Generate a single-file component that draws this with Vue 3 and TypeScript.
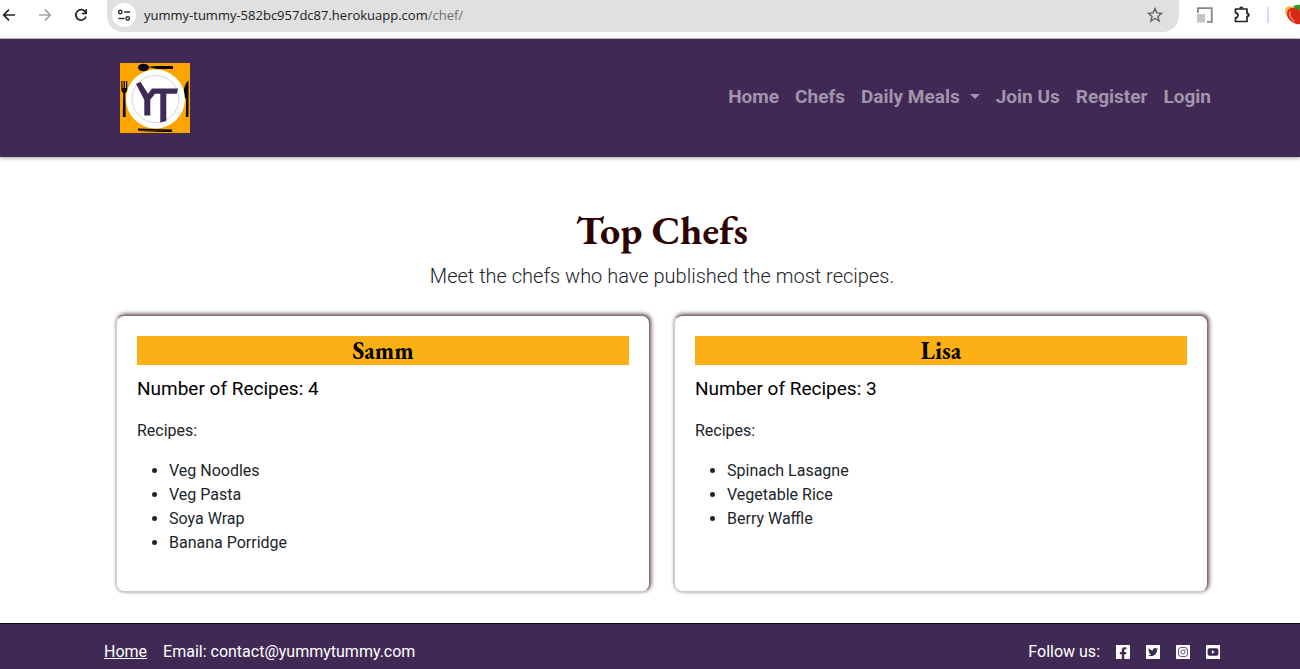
<script setup lang="ts">
interface Chef {
  name: string
  recipes: string[]
}

const navLinks: { label: string; menu?: boolean }[] = [
  { label: 'Home' },
  { label: 'Chefs' },
  { label: 'Daily Meals', menu: true },
  { label: 'Join Us' },
  { label: 'Register' },
  { label: 'Login' },
]

const chefs: Chef[] = [
  { name: 'Samm', recipes: ['Veg Noodles', 'Veg Pasta', 'Soya Wrap', 'Banana Porridge'] },
  { name: 'Lisa', recipes: ['Spinach Lasagne', 'Vegetable Rice', 'Berry Waffle'] },
]
</script>

<template>
  <div class="page">
    <div class="toolbar">
      <button class="tool back" aria-label="Back">
        <svg width="16" height="16" viewBox="0 0 16 16"><path d="M15 8H4M9 2.700L3.700 8 9 13.300" fill="none" stroke="#202124" stroke-width="1.700" /></svg>
      </button>
      <button class="tool" aria-label="Forward">
        <svg width="16" height="16" viewBox="0 0 16 16"><path d="M2 8h11M8 2.700L13.300 8 8 13.300" fill="none" stroke="#a5a5a5" stroke-width="1.700" /></svg>
      </button>
      <button class="tool" aria-label="Reload">
        <svg width="16" height="16" viewBox="0 0 16 16">
          <path d="M13 9.500A5.200 5.200 0 1 1 11.900 4.400L13.300 6" fill="none" stroke="#202124" stroke-width="1.700" />
          <path d="M13.900 2v5.200H8.800V5.700h3.600V2z" fill="#202124" />
        </svg>
      </button>
      <div class="address">
        <button class="site-info" aria-label="View site information">
          <svg width="14" height="14" viewBox="0 0 14 14" fill="none" stroke="#303134" stroke-width="1.500">
            <circle cx="3.300" cy="4" r="1.700" /><path d="M7 4h6" />
            <circle cx="10.700" cy="10.500" r="1.700" /><path d="M1.500 10.500h6" />
          </svg>
        </button>
        <div class="url">yummy-tummy-582bc957dc87.herokuapp.com<span>/chef/</span></div>
        <button class="star" aria-label="Bookmark this page">
          <svg width="16" height="16" viewBox="0 0 16 16"><path d="M8 1.600l1.900 4.300 4.700.4-3.600 3.100 1.100 4.600L8 11.500 3.900 14 5 9.400 1.400 6.300l4.700-.4z" fill="none" stroke="#5f6368" stroke-width="1.400" /></svg>
        </button>
      </div>
      <div class="extensions">
        <button aria-label="Page resizer">
          <svg width="16" height="16" viewBox="0 0 16 16">
            <path d="M1 6V1.200h13.800v13.600H10" fill="none" stroke="#858585" stroke-width="1.800" />
            <rect x="0" y="7" width="8" height="8.500" fill="#c4c4c4" />
          </svg>
        </button>
        <button aria-label="Extensions">
          <svg width="18" height="18" viewBox="0 0 18 18">
            <path d="M2.500 3h11.500v4.300a1.600 1.600 0 0 1 0 3.200v5h-11.500v-3.700a2.500 2.500 0 0 0 0-5z" fill="none" stroke="#202124" stroke-width="1.700" stroke-linejoin="round" />
            <path d="M6.200 2.600a2.100 2.100 0 0 1 4.200 0zM14.500 6.900a2.100 2.100 0 0 1 0 4.200z" fill="#202124" />
          </svg>
        </button>
        <span class="divider"></span>
        <button class="fruit" aria-label="Profile">
          <svg width="22" height="22" viewBox="0 0 22 22">
            <path d="M0 7c0-4 4-6 8-4l-4 11C1 12 0 10 0 7z" fill="#f0b640" />
            <path d="M8 3c2-3 8-3 14 0v8z" fill="#2f9b28" />
            <path d="M2 10c0-5 4-7 8-6 5 1 8 6 8 11 0 4-3 6-6 5-5-1-10-5-10-10z" fill="#d92a16" />
            <path d="M5 8c-1 3 1 7 4 9" fill="none" stroke="#f0705a" stroke-width="2" stroke-linecap="round" />
          </svg>
        </button>
      </div>
    </div>

    <header class="site-header">
      <a href="#" class="logo" aria-label="Yummy Tummy">
        <svg width="70" height="70" viewBox="0 0 70 70">
          <rect width="70" height="70" fill="#ffa500" />
          <ellipse cx="23.500" cy="4.500" rx="5.500" ry="3.800" fill="#080604" />
          <path d="M27 3.800l10-.8h16v3H37z" fill="#080604" />
          <path d="M1.300 18v8c0 2.500 1 3.500 2 4L2.800 54h2.900L5.200 30c1-.5 2-1.500 2-4v-8H6v7H4.900v-7H3.600v7H2.500v-7z" fill="#080604" />
          <path d="M68.500 17.500c-4 3-5.500 10-4.500 18h2.300L65.800 54h2.700z" fill="#080604" />
          <path d="M18 65.500l34 1v1.200H18zM18 69l34-1.500V69z" fill="#080604" />
          <circle cx="35.500" cy="36" r="29.500" fill="#fff" />
          <circle cx="35.500" cy="36" r="23.500" fill="#fff" stroke="#d5d5d8" />
          <path d="M16 20.700l4.700-1.700L28 30.700l4-5.200h26l-1.200 5.200H46.300V58l-6 1.500V30.700H35l-4.700 6v15.800h-6V37z" fill="#402a55" />
        </svg>
      </a>
      <nav>
        <a v-for="link in navLinks" :key="link.label" href="#" :class="{ menu: link.menu }">{{ link.label }}</a>
      </nav>
    </header>

    <main>
      <h1>Top Chefs</h1>
      <p class="lead">Meet the chefs who have published the most recipes.</p>
      <div class="cards">
        <article v-for="chef in chefs" :key="chef.name" class="card">
          <h2>{{ chef.name }}</h2>
          <h3>Number of Recipes: {{ chef.recipes.length }}</h3>
          <p>Recipes:</p>
          <ul>
            <li v-for="recipe in chef.recipes" :key="recipe">{{ recipe }}</li>
          </ul>
        </article>
      </div>
    </main>

    <footer>
      <div class="contact">
        <a href="#">Home</a>
        <span>Email: contact@yummytummy.com</span>
      </div>
      <div class="social">
        <span>Follow us:</span>
        <a href="#" aria-label="Facebook">
          <svg viewBox="0 0 448 512"><path d="M448 32H0v448h185.250V327.690h-63V256h63v-54.640c0-62.150 37-96.480 93.670-96.480 27.140 0 55.520 4.840 55.520 4.840v61h-31.270c-30.810 0-40.420 19.120-40.420 38.730V256h68.780l-11 71.690h-57.780V480H448z" /></svg>
        </a>
        <a href="#" aria-label="Twitter">
          <svg viewBox="0 0 448 512"><path d="M432 32H16C7 32 0 39 0 48v416c0 9 7 16 16 16h416c9 0 16-7 16-16V48c0-9-7-16-16-16zm-80.900 158.800c.2 2.800.2 5.700.2 8.500 0 86.700-66 186.600-186.600 186.600-37.200 0-71.700-10.800-100.700-29.400 5.300.6 10.400.8 15.800.8 30.700 0 58.900-10.400 81.400-28-28.800-.6-53-19.500-61.300-45.500 10.100 1.500 19.200 1.500 29.600-1.200-30-6.100-52.500-32.500-52.500-64.400v-.8c8.700 4.900 18.900 7.900 29.600 8.300a65.447 65.447 0 0 1-29.200-54.600c0-12.200 3.200-23.400 8.900-33.100 32.300 39.800 80.800 65.800 135.200 68.600-9.300-44.500 24-80.600 64-80.600 18.900 0 35.900 7.900 47.900 20.700 14.800-2.800 29-8.300 41.600-15.800-4.900 15.200-15.200 28-28.800 36.100 13.200-1.400 26-5.100 37.800-10.200-8.900 13.100-20.100 24.700-32.900 34z" /></svg>
        </a>
        <a href="#" aria-label="Instagram">
          <svg viewBox="0 0 448 512">
            <rect y="32" width="448" height="448" rx="16" />
            <g fill="none" stroke="#402a55" stroke-width="26">
              <rect x="82" y="114" width="284" height="284" rx="76" />
              <circle cx="224" cy="256" r="64" />
            </g>
            <circle cx="300" cy="181" r="17" fill="#402a55" />
          </svg>
        </a>
        <a href="#" aria-label="YouTube">
          <svg viewBox="0 0 448 512">
            <rect y="32" width="448" height="448" rx="16" />
            <rect x="50" y="137" width="348" height="238" rx="60" fill="#402a55" />
            <path d="M188 202l94 54-94 54z" />
          </svg>
        </a>
      </div>
    </footer>
  </div>
</template>

<style>
body {
  margin: 0;
  background: #fff;
}
</style>

<style scoped>
* {
  box-sizing: border-box;
}

.page {
  display: flex;
  flex-direction: column;
  min-height: 100vh;
  overflow: hidden;
  font: 400 16px/24px Roboto, sans-serif;
  color: #212529;
}

button {
  display: flex;
  align-items: center;
  justify-content: center;
  padding: 0;
  border: 0;
  background: none;
  flex: none;
}

svg {
  display: block;
}

.toolbar {
  display: flex;
  align-items: flex-start;
  height: 39px;
  border-bottom: 1px solid #c8cbc8;
}

.tool {
  width: 36px;
  height: 30px;
}

.back {
  width: 27px;
  justify-content: flex-start;
}

.address {
  display: flex;
  align-items: center;
  flex: 1;
  height: 32px;
  margin-left: 8px;
  padding: 0 16px 2px 5px;
  border-radius: 0 0 16px 16px;
  background: #e0e0e0;
}

.site-info {
  width: 24px;
  height: 24px;
  border-radius: 50%;
  background: #fff;
}

.url {
  flex: 1;
  margin-left: 8px;
  font: 13px/20px "Open Sans", sans-serif;
  color: #202124;
}

.url span {
  color: #6b6e72;
}

.extensions {
  display: flex;
  align-items: center;
  height: 30px;
  margin-left: 18px;
}

.extensions button + button {
  margin-left: 20px;
}

.divider {
  width: 2px;
  height: 16px;
  margin-left: 16px;
  background: #e5d3fb;
}

.fruit {
  width: 15px;
  margin-left: 16px;
  justify-content: flex-start;
}

.fruit svg {
  flex: none;
}

.site-header {
  display: flex;
  align-items: center;
  justify-content: space-between;
  height: 118px;
  padding: 0 81px 0 120px;
  background: #402a55;
  box-shadow: 0 1px 4px rgba(44, 2, 2, 0.4);
}

nav {
  display: flex;
  padding-bottom: 2px;
}

nav a {
  padding: 0 8px;
  font-size: 19px;
  font-weight: 700;
  color: #a095ab;
  text-decoration: none;
}

.menu::after {
  content: "";
  display: inline-block;
  margin-left: 10px;
  vertical-align: 4px;
  border: 5px solid transparent;
  border-top-color: #a095ab;
  border-bottom: 0;
}

main {
  flex: 1;
  padding: 49px 92px 31px 116px;
}

h1 {
  margin: 0 0 7px;
  font: 700 40px/48px "EB Garamond", "Liberation Serif", serif;
  color: #2c0202;
  text-align: center;
}

.lead {
  margin: 0 0 24px;
  font-size: 20px;
  font-weight: 300;
  line-height: 30px;
  text-align: center;
}

.cards {
  display: grid;
  grid-template-columns: 1fr 1fr;
  gap: 24px;
}

.card {
  padding: 20px;
  border: 1px solid #dfdcdc;
  border-color: #85706f #85706f #cfc9c9 #cfc9c9;
  border-radius: 8px;
  background: #fff;
  box-shadow: 1px -1px 4px rgba(44, 2, 2, 0.75);
}

h2 {
  margin: 0 0 12px;
  font: 700 24px/29px "EB Garamond", "Liberation Serif", serif;
  color: #000;
  text-align: center;
  background: #fbb016;
}

h3 {
  margin: 0 0 18px;
  font-size: 19px;
  font-weight: 400;
  line-height: 24px;
  color: #000;
}

.card p {
  margin: 0 0 16px;
}

ul {
  margin: 0 0 16px;
  padding-left: 32px;
}

footer {
  display: flex;
  justify-content: space-between;
  padding: 16px 80px 5px 104px;
  border-top: 1px solid #140808;
  background: #402a55;
  color: #fff;
}

footer a {
  color: #fff;
}

.contact,
.social {
  display: flex;
  align-items: center;
  gap: 16px;
}

.social svg {
  width: 14px;
  height: 16px;
  fill: #fff;
}
</style>
